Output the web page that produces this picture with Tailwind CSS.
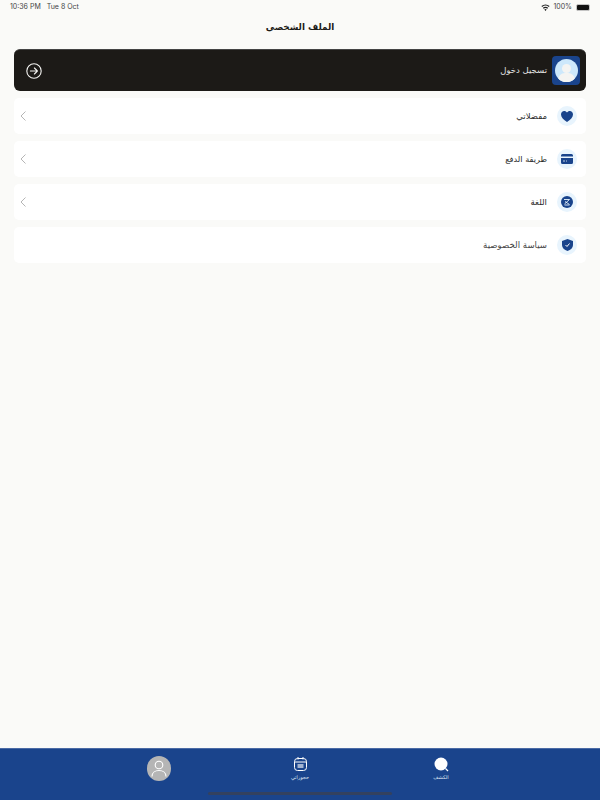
<!DOCTYPE html>
<html lang="ar">
<head>
    <meta charset="utf-8">
    <script src="https://cdn.jsdelivr.net/npm/@tailwindcss/browser@4"></script>
</head>
<body>
    <div class="h-[800px] w-[600px] flex flex-col overflow-hidden bg-[#fafaf8] font-['DejaVu_Sans',sans-serif] text-[#1c1a17]">
        <!-- Status bar -->
        <div class="h-[14px] pt-[1px] px-[10px] flex flex-row items-center justify-between font-['Inter',sans-serif] text-[7px] text-[#444]">
            <div class="flex gap-[6px]"><span>10:36 PM</span><span>Tue 8 Oct</span></div>
            <div class="flex items-center gap-[3px]">
                <svg width="9" height="7" viewBox="0 0 18 14" fill="#222"><path d="M9 14 6.6 11a3.6 3.6 0 0 1 4.8 0zM5.3 9.5 3.7 7.6a8 8 0 0 1 10.6 0l-1.6 1.9a5.6 5.6 0 0 0-7.4 0zM2.4 6 .8 4.1a12.4 12.4 0 0 1 16.4 0L15.6 6a10 10 0 0 0-13.2 0z"/></svg>
                <span>100%</span>
                <div class="ml-[1px] w-[14px] h-[7px] rounded-[2px] bg-[#111] border border-[#c4c4c4]"></div>
            </div>
        </div>

        <!-- Title -->
        <div dir="rtl" class="h-[27px] pt-[1px] flex items-center justify-center text-[8.8px] font-bold">الملف الشخصي</div>

        <div dir="rtl" class="mx-[14px] mt-[8px] flex flex-col gap-[7px]">
            <!-- Login card -->
            <div class="h-[42px] rounded-[6px] bg-[#1c1a17] border-t border-[#444] flex items-center justify-between pr-[6px] pl-[12px]">
                <div class="flex items-center gap-[5px]">
                    <div class="w-[28px] h-[29px] rounded-[4px] bg-[#1a448c] flex items-center justify-center">
                        <div class="relative w-[23px] h-[23px] rounded-full bg-[#cde8fb] overflow-hidden">
                            <div class="absolute left-[7px] top-[5px] w-[9px] h-[9px] rounded-full bg-[#f4f4f2]"></div>
                            <div class="absolute left-[3px] top-[14px] w-[17px] h-[14px] rounded-full bg-[#f4f4f2]"></div>
                        </div>
                    </div>
                    <span class="text-[8.5px] text-[#e4e4e4]">تسجيل دخول</span>
                </div>
                <svg width="16" height="16" viewBox="0 0 16 16" fill="none" stroke="#f4f4f2" stroke-width="1.1" stroke-linecap="round" stroke-linejoin="round"><circle cx="8" cy="8" r="7.2"/><path d="M4.4 8h7M8.4 5l3 3-3 3"/></svg>
            </div>

            <!-- Favourites -->
            <div class="h-[36px] rounded-[5px] bg-white flex items-center justify-between pr-[9px] pl-[6px]">
                <div class="flex items-center gap-[10px]">
                    <div class="w-[20px] h-[20px] rounded-full bg-[#e8f4fd] flex items-center justify-center">
                        <svg width="12" height="11" viewBox="0 0 12 11" fill="#1a448c"><path d="M6 11C2.5 8.4 0 6.3 0 3.4 0 1.4 1.5 0 3.2 0 4.4 0 5.4.6 6 1.6 6.6.6 7.6 0 8.8 0 10.5 0 12 1.4 12 3.4c0 2.9-2.5 5-6 7.6z"/></svg>
                    </div>
                    <span class="text-[8.5px] text-[#2a2a2a]">مفضلاتي</span>
                </div>
                <svg width="6" height="10" viewBox="0 0 6 10" fill="none" stroke="#b5b5b5" stroke-width="1"><path d="M5.5.5 1 5l4.500 4.500"/></svg>
            </div>

            <!-- Payment -->
            <div class="h-[36px] rounded-[5px] bg-white flex items-center justify-between pr-[9px] pl-[6px]">
                <div class="flex items-center gap-[10px]">
                    <div class="w-[20px] h-[20px] rounded-full bg-[#e8f4fd] flex items-center justify-center">
                        <svg width="12" height="10" viewBox="0 0 12 10" fill="#1a448c"><path d="M1.500 0h9A1.500 1.500 0 0 1 12 1.500V2.500H0V1.500A1.500 1.500 0 0 1 1.500 0zM0 4h12v4.500A1.500 1.500 0 0 1 10.500 10h-9A1.500 1.500 0 0 1 0 8.500z"/><path d="M2 7h2M5 7h1" stroke="#e8f4fd" stroke-width=".8"/></svg>
                    </div>
                    <span class="text-[8.2px] text-[#2a2a2a]">طريقة الدفع</span>
                </div>
                <svg width="6" height="10" viewBox="0 0 6 10" fill="none" stroke="#b5b5b5" stroke-width="1"><path d="M5.5.5 1 5l4.500 4.500"/></svg>
            </div>

            <!-- Language -->
            <div class="h-[36px] rounded-[5px] bg-white flex items-center justify-between pr-[9px] pl-[6px]">
                <div class="flex items-center gap-[10px]">
                    <div class="w-[20px] h-[20px] rounded-full bg-[#e8f4fd] flex items-center justify-center">
                        <svg width="12" height="12" viewBox="0 0 12 12"><circle cx="6" cy="6" r="6" fill="#1a448c"/><path d="M3 3.500h5.500M8.500 3.500 3.500 8M4 5.500 8.500 8.500M3.500 9h5" fill="none" stroke="#e8f4fd" stroke-width=".9"/></svg>
                    </div>
                    <span class="text-[8.5px] text-[#2a2a2a]">اللغة</span>
                </div>
                <svg width="6" height="10" viewBox="0 0 6 10" fill="none" stroke="#b5b5b5" stroke-width="1"><path d="M5.5.5 1 5l4.500 4.500"/></svg>
            </div>

            <!-- Privacy -->
            <div class="h-[36px] rounded-[5px] bg-white flex items-center pr-[9px] pl-[6px]">
                <div class="flex items-center gap-[10px]">
                    <div class="w-[20px] h-[20px] rounded-full bg-[#e8f4fd] flex items-center justify-center">
                        <svg width="11" height="12" viewBox="0 0 11 12"><path d="M5.500 0 11 2v4c0 3-2.300 5-5.500 6C2.300 11 0 9 0 6V2z" fill="#1a448c"/><path d="M3.500 6l1.500 1.500 2.500-3" fill="none" stroke="#fff" stroke-width="1"/></svg>
                    </div>
                    <span class="text-[8.6px] text-[#444]">سياسة الخصوصية</span>
                </div>
            </div>
        </div>

        <!-- Tab bar -->
        <div dir="rtl" class="relative mt-auto h-[52px] bg-[#1a448c] border-t border-[#4a6aa5] flex justify-center">
            <div class="w-[141px] flex flex-col items-center pt-[8px]">
                <svg width="15" height="15" viewBox="0 0 15 15"><circle cx="7" cy="7" r="6.500" fill="#fff"/><path d="M11.500 11.500 14 14" stroke="#fff" stroke-width="1.200"/></svg>
                <span class="mt-[1px] text-[5px] leading-[8px] text-[#dfe6f2]">الكشف</span>
            </div>
            <div class="w-[141px] flex flex-col items-center pt-[8px]">
                <svg width="13" height="14" viewBox="0 0 13 14" fill="none" stroke="#fff" stroke-width="1"><rect x=".5" y="1.500" width="12" height="12" rx="3"/><path d="M.5 5h12M4 0v2.500M9 0v2.500"/><path d="M3.500 7h6v4h-6z" fill="#fff" fill-opacity=".6" stroke="none"/></svg>
                <span class="mt-[2px] text-[5px] leading-[8px] text-[#dfe6f2]">حجوزاتي</span>
            </div>
            <div class="w-[141px] flex flex-col items-center pt-[7px]">
                <div class="w-[24px] h-[25px] rounded-full bg-[#b5b5b5] flex items-center justify-center">
                    <svg width="16" height="17" viewBox="0 0 16 17" fill="none" stroke="#fff" stroke-width="1.100"><circle cx="8" cy="5" r="3.800"/><path d="M1 16.500c0-3.800 3-6 7-6s7 2.200 7 6"/></svg>
                </div>
            </div>
            <div class="absolute left-[208px] bottom-[5px] w-[184px] h-[3px] rounded-full bg-[#33415f]"></div>
        </div>
    </div>
</body>
</html>
